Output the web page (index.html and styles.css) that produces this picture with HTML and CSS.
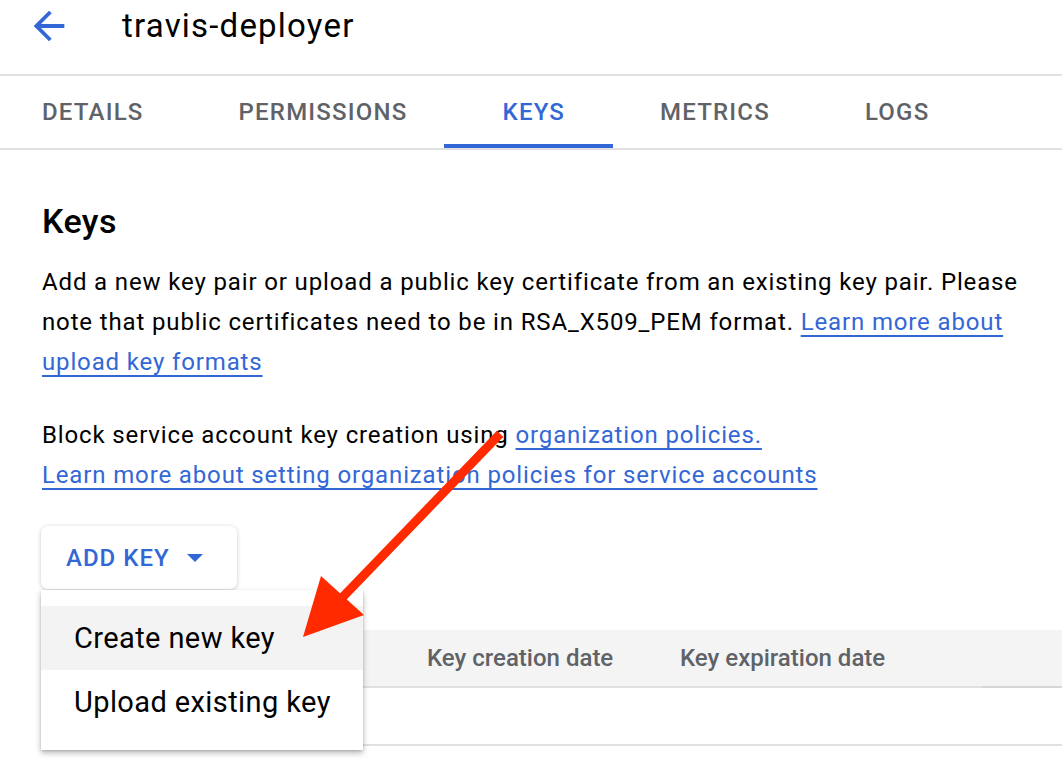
FILE: index.html
```html
<!DOCTYPE html>
<html lang="en">
<head>
<meta charset="utf-8">
<title>travis-deployer</title>
<link rel="stylesheet" href="styles.css">
</head>
<body>
<header class="topbar">
  <svg class="back-icon" viewBox="0 0 24 24" width="46" height="46" aria-hidden="true">
    <path d="M20 11H7.83l5.59-5.59L12 4l-8 8 8 8 1.41-1.41L7.83 13H20v-2z" fill="#3367d6"/>
  </svg>
  <h1 class="title">travis-deployer</h1>
</header>
<nav class="tabs">
  <span class="tab">DETAILS</span>
  <span class="tab">PERMISSIONS</span>
  <span class="tab tab-active">KEYS</span>
  <span class="tab">METRICS</span>
  <span class="tab">LOGS</span>
</nav>
<main class="content">
  <h2 class="heading">Keys</h2>
  <p class="para">Add a new key pair or upload a public key certificate from an existing key pair. Please note that public certificates need to be in RSA_X509_PEM format. <a class="link" href="#">Learn more about upload key formats</a></p>
  <p class="para para-second">Block service account key creation using <a class="link" href="#">organization policies.</a><br><a class="link" href="#">Learn more about setting organization policies for service accounts</a></p>
  <div class="add-wrap">
    <button class="add-btn">ADD KEY <span class="caret"></span></button>
    <div class="menu">
      <div class="menu-item menu-item-hover">Create new key</div>
      <div class="menu-item">Upload existing key</div>
    </div>
  </div>
  <div class="table">
    <div class="thead">
      <div class="th th-spacer"></div>
      <div class="th">Key creation date</div>
      <div class="th">Key expiration date</div>
      <div class="th th-last"></div>
    </div>
    <div class="trow"></div>
  </div>
</main>
<svg class="annot-arrow" width="1062" height="780" viewBox="0 0 1062 780" aria-hidden="true">
  <line x1="497" y1="437" x2="340" y2="600" stroke="#ff2a00" stroke-width="9" stroke-linecap="square"/>
  <polygon points="303,637 321,576 364,615" fill="#ff2a00"/>
</svg>
</body>
</html>
```
FILE: styles.css
```css
* { box-sizing: border-box; }
html, body { margin: 0; padding: 0; background: #fff; }
body {
  font-family: Roboto, "Noto Sans", Arial, sans-serif;
  color: #202124;
  width: 1062px;
  height: 780px;
  overflow: hidden;
  position: relative;
}
.topbar {
  height: 76px;
  border-bottom: 2px solid #e0e0e0;
  display: flex;
  align-items: flex-start;
  padding-left: 26px;
}
.back-icon { margin-top: 3px; flex: none; }
.title {
  margin: 6px 0 0 50px;
  font-size: 33px;
  font-weight: 400;
  line-height: 40px;
  color: #000;
  letter-spacing: 1.2px;
}
.tabs {
  display: flex;
  height: 74px;
  border-bottom: 2px solid #e0e0e0;
  padding-left: 42px;
  gap: 95px;
}
.tab {
  position: relative;
  display: flex;
  align-items: center;
  font-size: 24px;
  font-weight: 500;
  color: #5f6368;
  letter-spacing: 1.2px;
}
.tab-active { color: #3367d6; }
.tab-active::after {
  content: "";
  position: absolute;
  left: -59px;
  right: -48px;
  bottom: 0;
  height: 4px;
  background: #3367d6;
}
.content { padding: 0 30px 0 42px; }
.heading {
  margin: 51px 0 0;
  font-size: 34px;
  font-weight: 500;
  line-height: 40px;
  color: #000;
  letter-spacing: 0.4px;
}
.para {
  margin: 21px 0 0;
  font-size: 24px;
  line-height: 40px;
  color: #000;
  letter-spacing: 0.86px;
}
.para-second { margin-top: 33px; }
.link {
  color: #3367d6;
  text-decoration: underline;
  text-decoration-thickness: 2px;
  text-underline-offset: 5px;
}
.add-wrap {
  position: relative;
  margin-top: 31px;
  height: 63px;
}
.add-btn {
  display: flex;
  align-items: center;
  height: 63px;
  width: 196px;
  margin-left: -1px;
  padding: 0 0 0 25px;
  border: none;
  border-radius: 7px;
  background: #fff;
  box-shadow: 0 1px 4px rgba(0,0,0,0.22);
  font-family: Roboto, Arial, sans-serif;
  font-size: 24px;
  font-weight: 500;
  color: #3367d6;
  letter-spacing: 1px;
}
.caret {
  width: 0;
  height: 0;
  margin-left: 17px;
  border-left: 8px solid transparent;
  border-right: 8px solid transparent;
  border-top: 8px solid #3367d6;
}
.menu {
  position: absolute;
  left: -1px;
  top: 64px;
  width: 322px;
  padding: 16px 0;
  background: #fff;
  box-shadow: 0 3px 6px rgba(0,0,0,0.28), 0 1px 2px rgba(0,0,0,0.12);
  z-index: 2;
}
.menu-item {
  height: 64px;
  display: flex;
  align-items: center;
  padding-left: 33px;
  font-size: 29px;
  color: #000;
  letter-spacing: 0.4px;
}
.menu-item-hover { background: #f3f3f3; }
.table {
  margin-top: 41px;
  margin-right: -30px;
}
.thead {
  display: grid;
  grid-template-columns: 385px 253px 302px 1fr;
  height: 58px;
  background: #f4f4f4;
}
.th {
  display: flex;
  align-items: center;
  border-bottom: 2px solid #e0e0e0;
  font-size: 24px;
  font-weight: 500;
  color: #5f6368;
  letter-spacing: 0;
}
.th-last { border-bottom-color: #d6d6d6; }
.trow {
  height: 58px;
  border-bottom: 2px solid #e0e0e0;
}
.annot-arrow {
  position: absolute;
  left: 0;
  top: 0;
  z-index: 3;
  pointer-events: none;
}
```
